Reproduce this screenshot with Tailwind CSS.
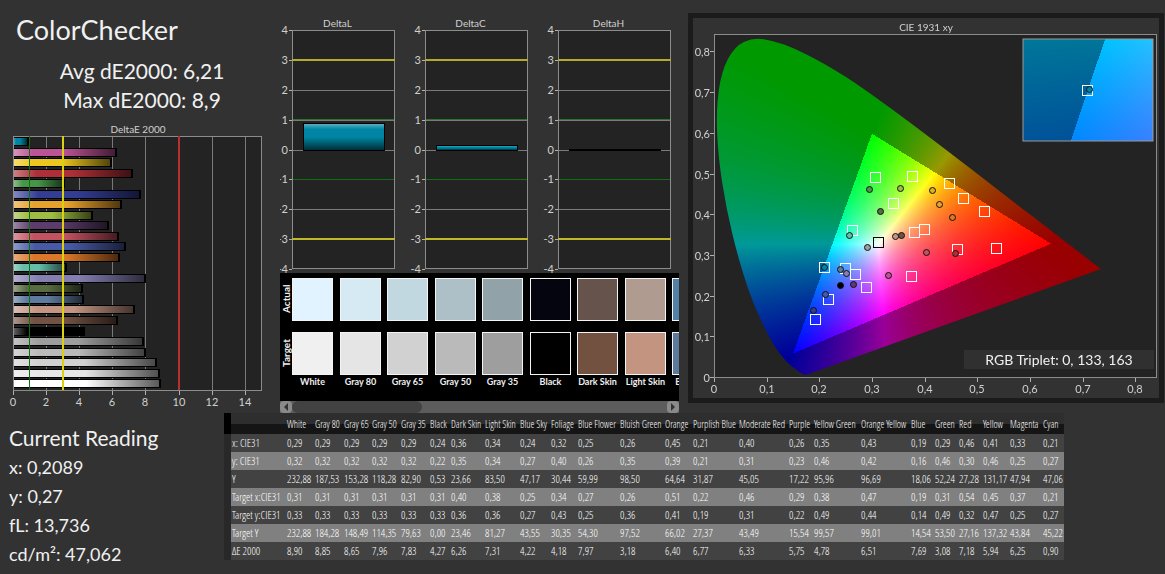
<!DOCTYPE html>
<html lang="en">
<head>
    <meta charset="UTF-8">
    <meta name="viewport" content="width=device-width, initial-scale=1.0">
    <title>ColorChecker</title>
    <script src="https://cdn.jsdelivr.net/npm/@tailwindcss/browser@4"></script>
</head>
<body class="min-h-screen bg-[#323232] font-['Lato','Noto_Sans',sans-serif] text-[#f0f0f0]">

    <div class="grid grid-cols-[280px_399px_1fr]">

        <!-- Summary + DeltaE chart -->
        <section>
            <h1 class="pt-3 pl-4 text-[27px] leading-9">ColorChecker</h1>
            <div class="pt-2 pl-1 text-center text-[21px] leading-[29px]">
                <p>Avg dE2000: 6,21</p>
                <p>Max dE2000: 8,9</p>
            </div>
            <svg id="deltaE" class="mt-2 block w-[280px]" viewBox="0 0 280 290"></svg>
        </section>

        <!-- Delta L / C / H and swatches -->
        <section class="flex flex-col">
            <svg id="deltas" class="block w-full" viewBox="0 0 399 273"></svg>
            <div class="flex h-32 overflow-hidden bg-black">
                <div class="flex w-3 shrink-0 flex-col items-center gap-3 pt-1 text-[10px] leading-3 font-bold">
                    <span class="h-[43px] rotate-180 text-center [writing-mode:vertical-rl]">Actual</span>
                    <span class="h-[43px] rotate-180 text-center [writing-mode:vertical-rl]">Target</span>
                </div>
                <div id="swatches" class="grid grid-cols-[48px_47px_48px_47px_48px_47px_48px_47px_48px] pt-[5px]"></div>
            </div>
            <div class="flex h-3 justify-between bg-[#5c5c5c]">
                <button class="w-3 rounded-sm bg-[#8a8a8a]" aria-label="Scroll left">
                    <svg class="block" viewBox="0 0 12 12"><path d="M8 2v8L4 6z" fill="#333"/></svg>
                </button>
                <div class="flex-1"><div class="h-3 w-[130px] rounded-md bg-[#424242]"></div></div>
                <button class="w-3 rounded-sm bg-[#8a8a8a]" aria-label="Scroll right">
                    <svg class="block" viewBox="0 0 12 12"><path d="M4 2v8l4-4z" fill="#333"/></svg>
                </button>
            </div>
        </section>

        <!-- CIE diagram -->
        <section class="pt-[13px] pr-px pl-[9px]">
            <div class="border-5 border-[#1b1b1b]">
                <svg id="cie" class="block w-full" viewBox="0 0 466 380">
                    <rect x="21" y="16" width="443" height="344" fill="#232323"/>
                    <foreignObject x="21" y="16" width="443" height="344"><canvas id="gamut" width="443" height="344"></canvas></foreignObject>
                    <foreignObject x="330" y="21" width="130" height="102"><canvas id="inset" width="130" height="102"></canvas></foreignObject>
                </svg>
            </div>
        </section>
    </div>

    <div class="grid grid-cols-[224px_1fr]">
        <section class="pt-2.5 pl-[9px] text-[18px] leading-[29px]">
            <h2 class="text-[21px] leading-[30px]">Current Reading</h2>
            <p>x: 0,2089</p>
            <p>y: 0,27</p>
            <p>fL: 13,736</p>
            <p>cd/m²: 47,062</p>
        </section>
        <div>
            <table class="w-[840px] table-fixed border-collapse text-left font-['Open_Sans_Condensed_Light','Roboto_Condensed',sans-serif] text-[11px] leading-[18px] whitespace-nowrap text-white">
                <colgroup id="cols"></colgroup>
                <thead><tr id="head" class="h-[21px] bg-linear-to-b from-[#2e2e2e] from-50% to-[#151515] to-50% text-[10px]"></tr></thead>
                <tbody id="rows"></tbody>
            </table>
        </div>
    </div>

    <script>
        const colors = [
            { name: 'White', color: '#ffffff', actual: '#e0f3ff', target: '#f0f0f0', w: 28 },
            { name: 'Gray 80', color: '#e6e6e6', actual: '#d5eaf3', target: '#e5e5e5', w: 29 },
            { name: 'Gray 65', color: '#d0d0d0', actual: '#c2d8e0', target: '#d1d1d1', w: 28 },
            { name: 'Gray 50', color: '#bababa', actual: '#adbfc7', target: '#bababa', w: 29 },
            { name: 'Gray 35', color: '#9e9e9e', actual: '#92a2a9', target: '#9e9e9e', w: 29 },
            { name: 'Black', color: '#000000', actual: '#05050f', target: '#000000', w: 21 },
            { name: 'Dark Skin', color: '#735244', actual: '#66534c', target: '#735141', w: 34 },
            { name: 'Light Skin', color: '#c49583', actual: '#b09b91', target: '#c39581', w: 35 },
            { name: 'Blue Sky', color: '#5d7b9e', actual: '#5380a5', target: '#5d7a9d', w: 31 },
            { name: 'Foliage', color: '#596c41', w: 27 },
            { name: 'Blue Flower', color: '#847eb1', w: 42 },
            { name: 'Bluish Green', color: '#63bda9', w: 45 },
            { name: 'Orange', color: '#db7828', w: 28 },
            { name: 'Purplish Blue', color: '#485aa6', w: 46 },
            { name: 'Moderate Red', color: '#c35261', w: 50 },
            { name: 'Purple', color: '#5c3c6b', w: 25 },
            { name: 'Yellow Green', color: '#9fbd40', w: 47 },
            { name: 'Orange Yellow', color: '#e7a12d', w: 50 },
            { name: 'Blue', color: '#333d94', w: 24 },
            { name: 'Green', color: '#469548', w: 24 },
            { name: 'Red', color: '#ae2f37', w: 24 },
            { name: 'Yellow', color: '#edc71f', w: 27 },
            { name: 'Magenta', color: '#bb5394', w: 33 },
            { name: 'Cyan', color: '#0086a4', w: 23 }
        ];

        const table = [
            ['x: CIE31', '0,29 0,29 0,29 0,29 0,29 0,24 0,36 0,34 0,24 0,32 0,25 0,26 0,45 0,21 0,40 0,26 0,35 0,43 0,19 0,29 0,46 0,41 0,33 0,21'],
            ['y: CIE31', '0,32 0,32 0,32 0,32 0,32 0,22 0,35 0,34 0,27 0,40 0,26 0,35 0,39 0,21 0,31 0,23 0,46 0,42 0,16 0,46 0,30 0,46 0,25 0,27'],
            ['Y', '232,88 187,53 153,28 118,28 82,90 0,53 23,66 83,50 47,17 30,44 59,99 98,50 64,64 31,87 45,05 17,22 95,96 96,69 18,06 52,24 27,28 131,17 47,94 47,06'],
            ['Target x:CIE31', '0,31 0,31 0,31 0,31 0,31 0,31 0,40 0,38 0,25 0,34 0,27 0,26 0,51 0,22 0,46 0,29 0,38 0,47 0,19 0,31 0,54 0,45 0,37 0,21'],
            ['Target y:CIE31', '0,33 0,33 0,33 0,33 0,33 0,33 0,36 0,36 0,27 0,43 0,25 0,36 0,41 0,19 0,31 0,22 0,49 0,44 0,14 0,49 0,32 0,47 0,25 0,27'],
            ['Target Y', '232,88 184,28 148,49 114,35 79,63 0,00 23,46 81,27 43,55 30,35 54,30 97,52 66,02 27,37 43,49 15,54 99,57 99,01 14,54 53,50 27,16 137,32 43,84 45,22'],
            ['ΔE 2000', '8,90 8,85 8,65 7,96 7,83 4,27 6,26 7,31 4,22 4,18 7,97 3,18 6,40 6,77 6,33 5,75 4,78 6,51 7,69 3,08 7,18 5,94 6,25 0,90']
        ];

        const line = (x1, y1, x2, y2, c, w = 1) =>
            `<line x1="${x1}" y1="${y1}" x2="${x2}" y2="${y2}" stroke="${c}" stroke-width="${w}" shape-rendering="crispEdges"/>`;
        const text = (x, y, s, anchor = 'middle', size = 11, fill = '#d0d0d0') =>
            `<text x="${x}" y="${y}" text-anchor="${anchor}" font-size="${size}" fill="${fill}">${s}</text>`;

        // Table
        document.getElementById('cols').innerHTML = '<col style="width:7px"><col style="width:54px">' +
            colors.map(c => `<col style="width:${c.w}px">`).join('');
        document.getElementById('head').innerHTML = '<td class="bg-black"></td><td></td>' +
            colors.map(c => `<th scope="col" class="pl-0.5 font-normal">${c.name}</th>`).join('');
        document.getElementById('rows').innerHTML = table.map(([name, values], i) => `
            <tr class="h-[18px] ${i % 2 ? 'bg-[#808080]' : 'bg-[#424242]'}">
                <td class="bg-[#282828]"></td>
                <th scope="row" class="pl-px font-normal">${name}</th>
                ${values.split(' ').map(v => `<td class="pl-0.5">${v}</td>`).join('')}
            </tr>`).join('');

        // Swatches
        document.getElementById('swatches').innerHTML = colors.slice(0, 9).map(c => `
            <div class="flex flex-col gap-[11px]">
                <div class="h-[43px] w-[41px] border border-[#f4f4f4]" style="background:${c.actual}"></div>
                <div class="h-[43px] w-[41px] border border-[#f4f4f4]" style="background:${c.target}"></div>
                <span class="-mt-2.5 w-[41px] text-center text-[9px] leading-3 font-bold whitespace-nowrap">${c.name}</span>
            </div>`).join('');

        // DeltaE bars
        const deltaE = table[6][1].split(' ').map(v => parseFloat(v.replace(',', '.')));
        const ex = v => Math.round(13 + v * 16.55);
        let svg = `<defs><linearGradient id="shadeX">
                <stop offset="0" stop-color="#fff" stop-opacity=".4"/><stop offset=".2" stop-color="#fff" stop-opacity="0"/>
                <stop offset=".5" stop-color="#000" stop-opacity="0"/><stop offset="1" stop-color="#000" stop-opacity=".65"/>
            </linearGradient></defs>
            <rect x="13" y="14" width="249" height="255" fill="#232323"/>`;
        svg += text(138, 11, 'DeltaE 2000', 'middle', 10);
        for (let v = 2; v <= 14; v += 2) svg += line(ex(v) + .5, 14, ex(v) + .5, 268, '#7a7a7a');
        colors.slice().reverse().forEach((c, i) => {
            const y = Math.round(16 + i * 10.53);
            const w = ex(deltaE[23 - i]) - 13;
            svg += `<rect x="13" y="${y - 1}" width="${w + 1}" height="9" fill="#000"/>
                <rect x="13" y="${y}" width="${w - 1}" height="7" fill="${c.color}"/>
                <rect x="13" y="${y}" width="${w - 1}" height="7" fill="url(#shadeX)"/>`;
        });
        svg += '<rect x="13.5" y="14.5" width="248" height="254" fill="none" stroke="#8c8c8c"/>';
        svg += line(29.5, 14, 29.5, 268, '#107010') + line(63, 14, 63, 268, '#d8d010', 2) + line(179, 14, 179, 268, '#b83030', 2);
        for (let v = 0; v <= 14; v += 2) svg += line(ex(v) + .5, 269, ex(v) + .5, 273, '#b0b0b0') + text(ex(v), 284, v);
        document.getElementById('deltaE').innerHTML = svg;

        // Delta L, C, H
        svg = `<defs><linearGradient id="shadeY" x2="0" y2="1">
                <stop offset="0" stop-color="#fff" stop-opacity=".35"/><stop offset=".2" stop-color="#fff" stop-opacity="0"/>
                <stop offset=".5" stop-color="#000" stop-opacity="0"/><stop offset="1" stop-color="#000" stop-opacity=".65"/>
            </linearGradient></defs>`;
        [['DeltaL', 12, 103, 27], ['DeltaC', 145, 103, 5], ['DeltaH', 278, 113, 1]].forEach(([name, x, w, h]) => {
            svg += `<rect x="${x}" y="30" width="${w}" height="239" fill="#232323"/>` + text(x + w / 2 - 6, 27, name, 'middle', 10);
            [90, 120, 150, 209].forEach(y => svg += line(x, y + .5, x + w, y + .5, '#7a7a7a'));
            svg += line(x, 119.5, x + w, 119.5, '#2c742c') + line(x, 179.5, x + w, 179.5, '#107010');
            svg += `<rect x="${x + 11}" y="${150 - h}" width="${w - 21}" height="${h + 1}" fill="#000"/>`;
            if (h > 1) {
                svg += `<rect x="${x + 12}" y="${151 - h}" width="${w - 23}" height="${h - 1}" fill="#0086a4"/>
                    <rect x="${x + 12}" y="${151 - h}" width="${w - 23}" height="${h - 1}" fill="url(#shadeY)"/>`;
            }
            svg += `<rect x="${x + .5}" y="30.5" width="${w - 1}" height="238" fill="none" stroke="#8c8c8c"/>`;
            svg += line(x, 60, x + w, 60, '#b4ac28', 2) + line(x, 239, x + w, 239, '#c0b828', 2);
            for (let v = -4; v <= 4; v++) {
                const y = Math.round(149.500 - v * 29.8);
                svg += line(x - 3, y + .5, x, y + .5, '#b0b0b0') + text(x - 4, y + 4, v, 'end');
            }
        });
        document.getElementById('deltas').innerHTML = svg;

        // xy chromaticity -> brightest linear RGB, dimmed outside the Rec.709 triangle
        function xyColor(x, y) {
            const X = x / y, Z = (1 - x - y) / y;
            const rgb = [
                3.2406 * X - 1.5372 - 0.4986 * Z,
                -0.9689 * X + 1.8758 + 0.0415 * Z,
                0.0557 * X - 0.2040 + 1.0570 * Z
            ];
            const dim = Math.min(...rgb) < 0 ? 0.6 : 1;
            const max = Math.max(...rgb);
            return rgb.map(c => 255 * dim * Math.max(c, 0) / max);
        }

        function paint(id, x0, x1, y0, y1) {
            const canvas = document.getElementById(id);
            const ctx = canvas.getContext('2d');
            const img = ctx.createImageData(canvas.width, canvas.height);
            for (let j = 0; j < canvas.height; j++) {
                for (let i = 0; i < canvas.width; i++) {
                    const x = x0 + (x1 - x0) * (i + .5) / canvas.width;
                    const y = y1 - (y1 - y0) * (j + .5) / canvas.height;
                    img.data.set([...xyColor(x, y), 255], (j * canvas.width + i) * 4);
                }
            }
            ctx.putImageData(img, 0, 0);
            return ctx;
        }

        const locus = [[.1741, .005], [.1689, .0069], [.1644, .0109], [.1566, .0177], [.144, .0297], [.1241, .0578], [.1096, .0868],
            [.0913, .1327], [.0687, .2007], [.0454, .295], [.0235, .4127], [.0082, .5384], [.0039, .6548], [.0139, .7502],
            [.0389, .812], [.0743, .8338], [.1142, .8262], [.1547, .8059], [.1929, .7816], [.2296, .7543], [.2658, .7243],
            [.3016, .6923], [.3731, .6245], [.4441, .5547], [.5125, .4866], [.5752, .4242], [.627, .3725], [.6658, .334],
            [.6915, .3083], [.719, .2809], [.7347, .2653]].map(([x, y]) => [x * 526.6, 343 - y * 407]);

        const ctx = paint('gamut', 0, 443 / 526.6, 0, 344 / 407);
        ctx.globalCompositeOperation = 'destination-in';
        ctx.beginPath();
        ctx.moveTo(...locus[0]);
        for (let i = 1; i < locus.length - 1; i++) {
            const [x, y] = locus[i], [nx, ny] = locus[i + 1];
            ctx.quadraticCurveTo(x, y, (x + nx) / 2, (y + ny) / 2);
        }
        ctx.lineTo(...locus[locus.length - 1]);
        ctx.closePath();
        ctx.fill();
        paint('inset', .1836, .2329, .246, .293);

        // Target squares and measured points
        const targets = [[182, 159], [219, 158], [256, 165], [200, 185], [270, 180], [291, 193], [159, 212], [221, 214], [231, 211],
            [264, 231], [303, 230], [218, 258], [131, 249], [152, 250], [162, 256], [173, 269], [135, 281], [122, 301], [394, 72]];
        const points = [[176, 171, '#469548'], [207, 170, '#9fbd40'], [239, 172, '#d8b520'], [246, 186, '#e7a12d'], [187, 193, '#596c41'],
            [259, 199, '#db7828'], [156, 217, '#63bda9'], [202, 218, '#c49583'], [208, 217, '#735244'], [174, 229, '#9e9e9e'],
            [233, 234, '#c35261'], [262, 235, '#ae2f37'], [195, 257, '#bb5394'], [147, 251, '#5d7b9e'], [153, 255, '#847eb1'],
            [131, 249, '#0086a4'], [147, 267, '#000000'], [160, 266, '#5c3c6b'], [132, 276, '#485aa6'], [120, 292, '#333d94'], [396, 71, '#0086a4']];
        svg = text(233, 13, 'CIE 1931 xy', 'middle', 10);
        svg += '<rect x="21.5" y="16.500" width="442" height="343" fill="none" stroke="#8c8c8c"/>';
        svg += '<rect x="330" y="21" width="130" height="102" fill="none" stroke="#9a9a9a"/>';
        targets.forEach(([x, y]) => svg += `<rect x="${x - 4.5}" y="${y - 4.5}" width="10" height="10" fill="none" stroke="#fff"/>`);
        svg += '<rect x="180.5" y="219.500" width="10" height="10" fill="none" stroke="#000"/>';
        points.forEach(([x, y, c]) => svg += `<circle cx="${x + .5}" cy="${y + .5}" r="3" fill="${c}" stroke="#111"/>`);
        for (let v = 0; v <= 8; v++) {
            const label = v ? '0,' + v : '0';
            const x = Math.round(21 + v * 52.66), y = Math.round(359 - v * 40.7);
            svg += line(x + .5, 360, x + .5, 364, '#b0b0b0') + text(x, 375, label);
            svg += line(17, y + .5, 21, y + .5, '#b0b0b0') + text(17, y + 5, label, 'end');
        }
        svg += '<rect x="271" y="332" width="190" height="19" fill="#303030"/>' + text(366, 347, 'RGB Triplet: 0, 133, 163', 'middle', 14, '#f0f0f0');
        document.getElementById('cie').insertAdjacentHTML('beforeend', svg);
    </script>
</body>
</html>
